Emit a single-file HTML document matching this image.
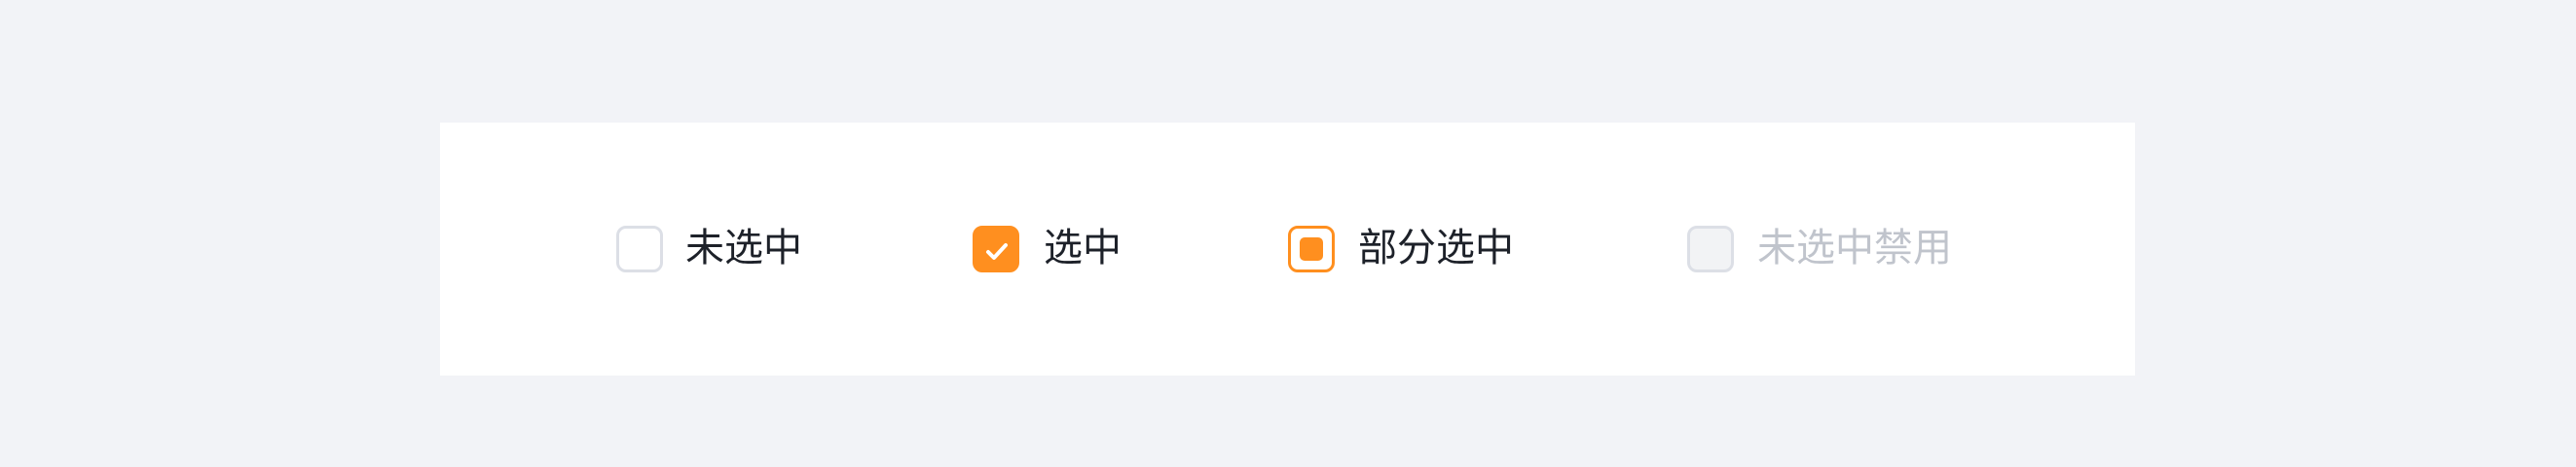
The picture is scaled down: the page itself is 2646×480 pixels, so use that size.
<!DOCTYPE html>
<html><head><meta charset="utf-8"><style>
html,body{margin:0;padding:0}
body{width:2646px;height:480px;background:#f2f3f7;position:relative;overflow:hidden;font-family:"Liberation Sans","Noto Sans CJK SC",sans-serif}
.card{position:absolute;left:452px;top:126px;width:1741px;height:260px;background:#fff}
.box{position:absolute;top:232px;width:42px;height:42px;border:3px solid #dcdfe6;border-radius:10px;box-sizing:content-box}
.t{position:absolute;top:231px;font-size:40px;line-height:48px;color:#1d2129}
</style></head><body>
<div class="card"></div>
<div class="box" style="left:633px;background:#fff"></div>
<div class="t" style="left:704px">未选中</div>
<div class="box" style="left:999px;border-color:#ff8f1f;background:#ff8f1f">
<svg width="42" height="42" style="position:absolute;left:0;top:0"><polyline points="13,24 19,30 31,17" fill="none" stroke="#fff" stroke-width="4" stroke-linecap="round" stroke-linejoin="round"/></svg></div>
<div class="t" style="left:1072px">选中</div>
<div class="box" style="left:1323px;border-color:#ff8f1f;background:#fff"><div style="position:absolute;left:9px;top:9px;width:24px;height:24px;background:#ff8f1f;border-radius:5px"></div></div>
<div class="t" style="left:1395px">部分选中</div>
<div class="box" style="left:1733px;background:#f2f3f5"></div>
<div class="t" style="left:1805px;color:#c0c4cc">未选中禁用</div>
</body></html>
